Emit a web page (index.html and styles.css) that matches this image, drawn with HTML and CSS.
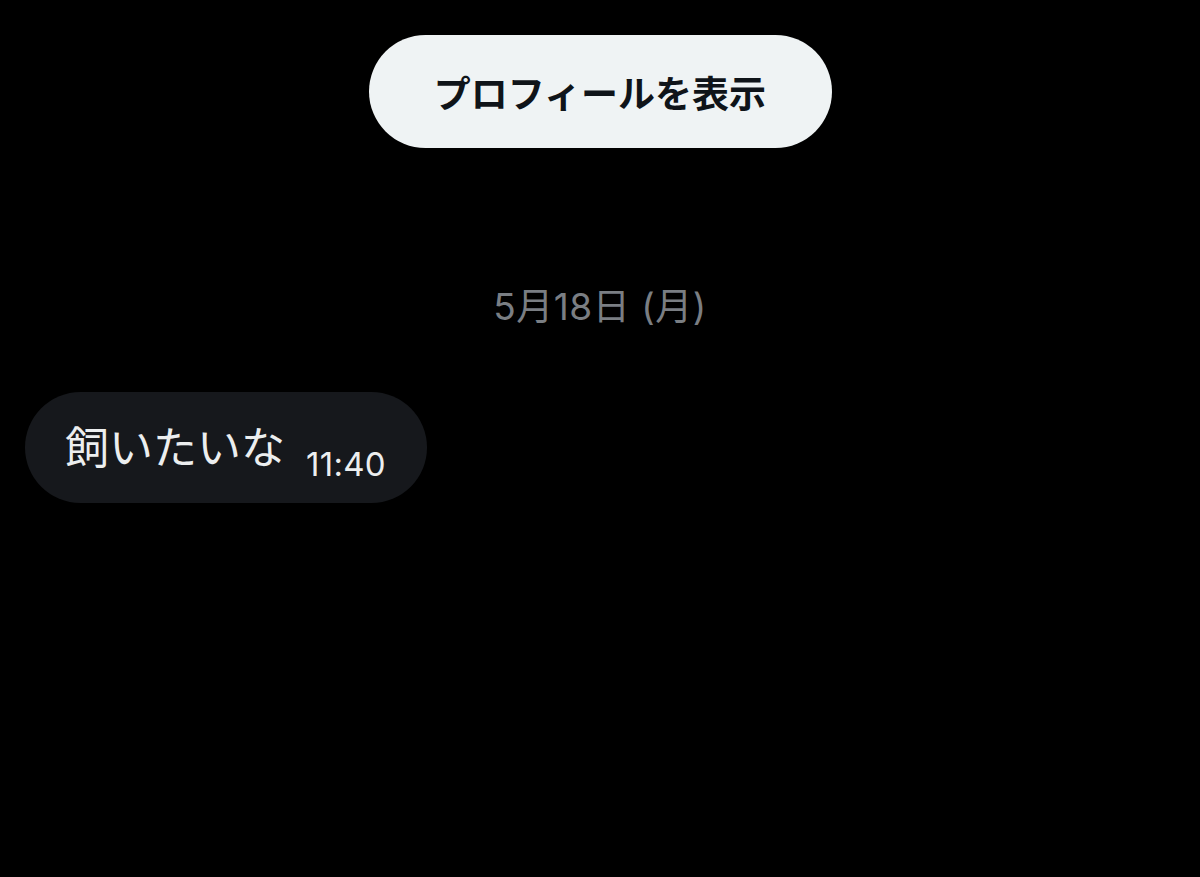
FILE: index.html
```html
<!DOCTYPE html>
<html lang="ja">
<head>
<meta charset="utf-8">
<link rel="stylesheet" href="styles.css">
</head>
<body>
<div class="page">
  <div class="top">
    <button class="profile-btn">プロフィールを表示</button>
  </div>
  <div class="date">5月18日 (月)</div>
  <div class="msg-row">
    <div class="bubble">
      <span class="msg-text">飼いたいな</span>
      <span class="msg-time">11:40</span>
    </div>
  </div>
</div>
</body>
</html>
```

FILE: styles.css
```css
html, body {
  margin: 0;
  padding: 0;
  background: #000;
  height: 100%;
}
.page {
  width: 1200px;
  height: 877px;
  background: #000;
  font-family: "Noto Sans CJK JP", "Noto Sans", sans-serif;
  overflow: hidden;
}
.top {
  display: flex;
  justify-content: center;
  padding-top: 35px;
}
.profile-btn {
  width: 463px;
  height: 113px;
  border: none;
  border-radius: 57px;
  background: #eff3f4;
  color: #0f1419;
  font-family: "Noto Sans CJK JP", sans-serif;
  font-weight: 700;
  font-size: 37px;
  letter-spacing: 0;
  padding: 0;
  display: flex;
  align-items: center;
  justify-content: center;
}
.date {
  text-align: center;
  color: #7a7e83;
  font-size: 37px;
  font-family: "Inter", "Noto Sans CJK JP", sans-serif;
  margin-top: 134px;
  line-height: 50px;
  height: 50px;
  letter-spacing: 0.5px;
}
.msg-row {
  display: flex;
  padding-left: 25px;
  margin-top: 60px;
}
.bubble {
  height: 111px;
  border-radius: 56px;
  background: #16181c;
  display: flex;
  align-items: center;
  padding: 0 40px 0 40px;
  box-sizing: border-box;
  width: 402px;
}
.msg-text {
  color: #eceeef;
  font-size: 44px;
  line-height: 1;
  margin-right: 21px;
  margin-top: -6px;
}
.msg-time {
  color: #eceeef;
  font-size: 33px;
  font-family: "Inter", sans-serif;
  margin-top: 34px;
  line-height: 1;
  letter-spacing: 0.3px;
}
```
